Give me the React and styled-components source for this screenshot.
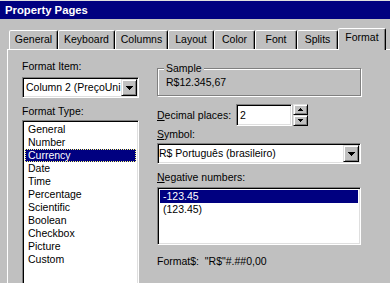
import React from 'react';
import styled, { createGlobalStyle, css } from 'styled-components';

const Global = createGlobalStyle`
  html, body { margin: 0; padding: 0; background: #c0c0c0; }
  body {
    font-family: "Liberation Sans", Arial, sans-serif;
    font-size: 10.5px;
    color: #000;
  }
  * { box-sizing: border-box; }
`;

const Window = styled.div`
  width: 390px;
  height: 283px;
  overflow: hidden;
  background: #c0c0c0;
  border-top: 1px solid #dfdfdf;
  display: flex;
  flex-direction: column;
`;

const TitleBar = styled.div`
  height: 18px;
  flex: none;
  background: #000080;
  color: #fff;
  font-weight: bold;
  font-size: 11.3px;
  line-height: 17px;
  padding: 1px 0 0 5px;
`;

const TabStrip = styled.div`
  height: 30px;
  flex: none;
  display: flex;
  align-items: flex-end;
  padding-left: 9px;
`;

const Tab = styled.div`
  flex: none;
  width: ${(p) => p.$w}px;
  height: 19px;
  border: 1px solid;
  border-bottom: none;
  border-color: #fff #000 transparent #fff;
  border-radius: 2px 2px 0 0;
  box-shadow: inset -1px 0 0 #808080;
  background: #c0c0c0;
  text-align: center;
  line-height: 13px;
  padding-top: 2px;
  white-space: nowrap;
  ${(p) =>
    p.$active &&
    css`
      height: 22px;
      margin-bottom: -1px;
      position: relative;
      z-index: 2;
    `}
`;

const Panel = styled.div`
  flex: 1;
  margin-left: 7px;
  border-top: 1px solid #fff;
  border-left: 1px solid #fff;
  display: flex;
  gap: 18px;
  padding: 10px 0 0 14px;
`;

const Column = styled.div`
  flex: none;
  width: ${(p) => p.$w}px;
  display: flex;
  flex-direction: column;
`;

const Label = styled.div`
  line-height: 13px;
  margin-top: ${(p) => p.$mt || 0}px;
  white-space: pre;
`;

const sunken = css`
  border: 1px solid;
  border-color: #808080 #fff #fff #808080;
  box-shadow: inset 1px 1px 0 #000, inset -1px -1px 0 #dfdfdf;
  background: #fff;
`;

const raised = css`
  border: 1px solid;
  border-color: #dfdfdf #000 #000 #dfdfdf;
  box-shadow: inset 1px 1px 0 #fff, inset -1px -1px 0 #808080;
  background: #c0c0c0;
`;

const Combo = styled.div`
  ${sunken};
  height: 21px;
  margin-top: ${(p) => p.$mt || 0}px;
  display: flex;
  padding: 1px;
`;

const ComboText = styled.div`
  flex: 1;
  min-width: 0;
  overflow: hidden;
  white-space: nowrap;
  line-height: 17px;
  padding-left: ${(p) => p.$indent}px;
`;

const DropButton = styled.div`
  ${raised};
  flex: none;
  width: 16px;
  display: flex;
  align-items: center;
  justify-content: center;
`;

const ListBox = styled.div`
  ${sunken};
  height: ${(p) => p.$h}px;
  margin-top: ${(p) => p.$mt || 0}px;
  padding: 2px 2px;
  overflow: hidden;
`;

const ListItem = styled.div`
  line-height: 13px;
  height: 13px;
  padding-left: 3px;
  white-space: nowrap;
  ${(p) =>
    p.$selected &&
    css`
      background: #000080;
      color: #fff;
    `}
  ${(p) =>
    p.$focus &&
    css`
      outline: 1px dotted #ffff80;
      outline-offset: -1px;
    `}
`;

const Group = styled.fieldset`
  margin: 2px 0 0;
  min-width: 0;
  padding: 1px 6px 6px 6px;
  border: 1px solid #808080;
  box-shadow: inset 1px 1px 0 #fff, 1px 1px 0 #fff;
`;

const Legend = styled.legend`
  padding: 0 2px;
  line-height: 13px;
  background: #c0c0c0;
`;

const SampleValue = styled.div`
  line-height: 13px;
  padding-left: 2px;
`;

const Row = styled.div`
  display: flex;
  align-items: center;
  height: 22px;
  margin-top: 8px;
`;

const RowLabel = styled.div`
  width: 79px;
  flex: none;
  line-height: 13px;
`;

const TextBox = styled.div`
  ${sunken};
  width: 56px;
  height: 22px;
  line-height: 16px;
  padding: 2px 0 0 3px;
`;

const Spinner = styled.div`
  flex: none;
  margin-left: 1px;
  width: 15px;
  height: 22px;
  display: flex;
  flex-direction: column;
`;

const SpinButton = styled.div`
  ${raised};
  height: 11px;
  display: flex;
  align-items: center;
  justify-content: center;
`;

const DownArrow = ({ size = 7 }) => {
  const rows = [];
  for (let i = 0; i * 2 < size; i++) {
    rows.push(<rect key={i} x={i} y={i} width={size - 2 * i} height={1} fill="#000" />);
  }
  return (
    <svg width={size} height={rows.length} shapeRendering="crispEdges">
      {rows}
    </svg>
  );
};

const UpArrow = ({ size = 5 }) => {
  const rows = [];
  const n = Math.ceil(size / 2);
  for (let i = 0; i < n; i++) {
    rows.push(<rect key={i} x={i} y={n - 1 - i} width={size - 2 * i} height={1} fill="#000" />);
  }
  return (
    <svg width={size} height={n} shapeRendering="crispEdges">
      {rows}
    </svg>
  );
};

const tabs = [
  ['General', 49],
  ['Keyboard', 57],
  ['Columns', 53],
  ['Layout', 46],
  ['Color', 41],
  ['Font', 42],
  ['Splits', 41],
  ['Format', 48],
];

const formatTypes = [
  'General',
  'Number',
  'Currency',
  'Date',
  'Time',
  'Percentage',
  'Scientific',
  'Boolean',
  'Checkbox',
  'Picture',
  'Custom',
];

export default function App() {
  return (
    <>
      <Global />
      <Window>
        <TitleBar>Property Pages</TitleBar>
        <TabStrip>
          {tabs.map(([name, w]) => (
            <Tab key={name} $w={w} $active={name === 'Format'}>
              {name}
            </Tab>
          ))}
        </TabStrip>
        <Panel>
          <Column $w={117}>
            <Label>Format Item:</Label>
            <Combo $mt={4}>
              <ComboText $indent={2}>Column 2 (PreçoUni</ComboText>
              <DropButton>
                <DownArrow />
              </DropButton>
            </Combo>
            <Label $mt={7}>Format Type:</Label>
            <ListBox $mt={2} $h={190}>
              {formatTypes.map((t) => (
                <ListItem key={t} $selected={t === 'Currency'} $focus={t === 'Currency'}>
                  {t}
                </ListItem>
              ))}
            </ListBox>
          </Column>
          <Column $w={204}>
            <Group>
              <Legend>Sample</Legend>
              <SampleValue>R$12.345,67</SampleValue>
            </Group>
            <Row>
              <RowLabel>
                <u>D</u>ecimal places:
              </RowLabel>
              <TextBox>2</TextBox>
              <Spinner>
                <SpinButton>
                  <UpArrow />
                </SpinButton>
                <SpinButton>
                  <DownArrow size={5} />
                </SpinButton>
              </Spinner>
            </Row>
            <Label $mt={2}>
              <u>S</u>ymbol:
            </Label>
            <Combo $mt={2}>
              <ComboText $indent={0}>R$ Português (brasileiro)</ComboText>
              <DropButton>
                <DownArrow />
              </DropButton>
            </Combo>
            <Label $mt={7}>
              <u>N</u>egative numbers:
            </Label>
            <ListBox $mt={3} $h={58}>
              <ListItem $selected>-123.45</ListItem>
              <ListItem>(123.45)</ListItem>
            </ListBox>
            <Label $mt={10}>{'Format$:  "R$"#.##0,00'}</Label>
          </Column>
        </Panel>
      </Window>
    </>
  );
}
